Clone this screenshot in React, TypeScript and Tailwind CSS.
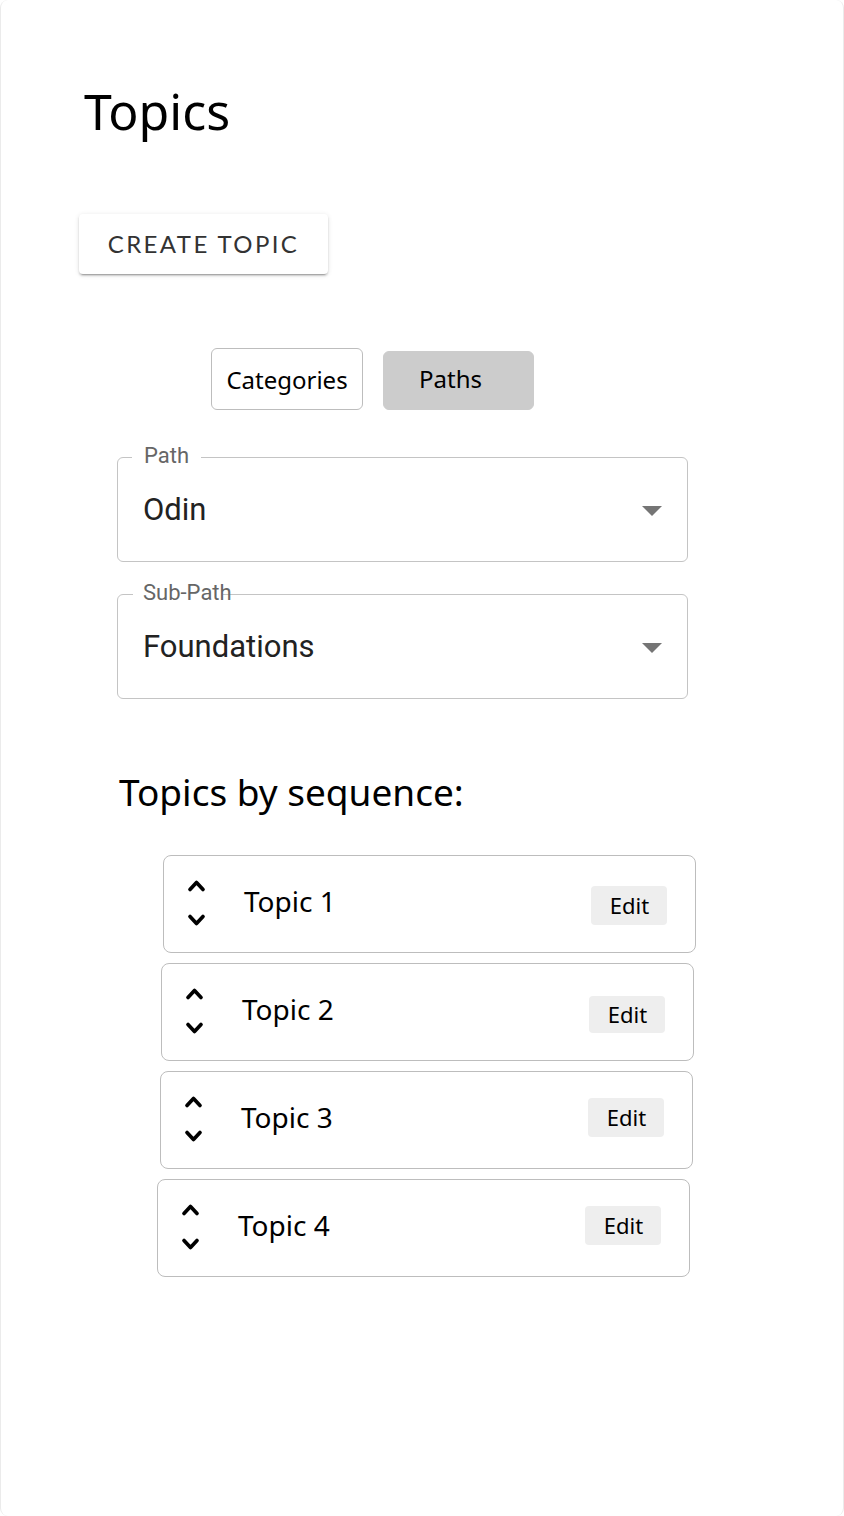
import { useState } from 'react';

const topics = [
  { name: 'Topic 1', ml: 'ml-[162px]', editTop: 'mt-[30px]', editH: 'h-[39px]' },
  { name: 'Topic 2', ml: 'ml-[160px]', editTop: 'mt-[32px]', editH: 'h-[37px]' },
  { name: 'Topic 3', ml: 'ml-[159px]', editTop: 'mt-[26px]', editH: 'h-[39px]' },
  { name: 'Topic 4', ml: 'ml-[156px]', editTop: 'mt-[26px]', editH: 'h-[39px]' },
];

function Chevrons() {
  return (
    <svg width="20" height="52" viewBox="0 0 20 52" fill="none" className="mt-[21px] shrink-0">
      <polyline points="4,12.5 10.5,5.5 17,12.5" stroke="#000" strokeWidth="3.7" strokeLinecap="round" strokeLinejoin="round" />
      <polyline points="4,39.5 10.5,46.5 17,39.5" stroke="#000" strokeWidth="3.7" strokeLinecap="round" strokeLinejoin="round" />
    </svg>
  );
}

function Caret() {
  return (
    <svg width="20" height="10" viewBox="0 0 20 10" className="absolute right-[25px] top-[48px]">
      <path d="M0 0 L20 0 L10 10 Z" fill="#757575" />
    </svg>
  );
}

export default function App() {
  const [tab, setTab] = useState<'categories' | 'paths'>('paths');

  return (
    <div className="w-full min-h-[1516px] bg-white border-x border-[#ebebeb] rounded-lg font-['Noto_Sans',sans-serif] text-black flex flex-col items-start">
      <h1 className="ml-[83px] mt-[87px] text-[50px] leading-[49px] font-normal">Topics</h1>

      <button className="ml-[78px] mt-[78px] w-[249px] h-[60px] bg-white rounded-[4px] shadow-[0px_3px_1px_-2px_rgba(0,0,0,0.2),0px_2px_2px_0px_rgba(0,0,0,0.14),0px_1px_5px_0px_rgba(0,0,0,0.12)] font-['Lato',sans-serif] text-[24px] tracking-[0.1em] text-[#333] uppercase flex items-center justify-center">
        Create Topic
      </button>

      <div className="ml-[210px] mt-[74px] flex items-end gap-[20px]">
        <button
          onClick={() => setTab('categories')}
          className={`w-[152px] h-[62px] rounded-[6px] border text-[24px] flex items-center justify-center pt-[2px] ${tab === 'categories' ? 'bg-[#cccccc] border-[#cccccc]' : 'bg-white border-[#bdbdbd]'}`}
        >
          Categories
        </button>
        <button
          onClick={() => setTab('paths')}
          className={`w-[151px] h-[59px] rounded-[6px] border text-[24px] flex items-start justify-start pl-[35px] pt-[9px] ${tab === 'paths' ? 'bg-[#cccccc] border-[#cccccc]' : 'bg-white border-[#bdbdbd]'}`}
        >
          Paths
        </button>
      </div>

      <div className="relative ml-[116px] mt-[47px] w-[571px] h-[105px] border border-[#c4c4c4] rounded-[6px] font-['Roboto',sans-serif] pl-[25px] pt-[36px]">
        <span className="absolute left-[14px] -top-[13px] px-[12px] bg-white text-[22px] leading-[22px] text-[#666]">Path</span>
        <div className="text-[31px] leading-[31px] text-[#222]">Odin</div>
        <Caret />
      </div>

      <div className="relative ml-[116px] mt-[32px] w-[571px] h-[105px] border border-[#c4c4c4] rounded-[6px] font-['Roboto',sans-serif] pl-[25px] pt-[36px]">
        <span className="absolute left-[15px] -top-[2px] w-[90px] h-[3px] bg-white" />
        <span className="absolute left-[25px] -top-[13px] text-[22px] leading-[22px] text-[#666]">Sub-Path</span>
        <div className="text-[31px] leading-[31px] text-[#222]">Foundations</div>
        <Caret />
      </div>

      <h2 className="ml-[118px] mt-[75px] text-[37px] leading-[36px] font-normal">Topics by sequence:</h2>

      <div className="mt-[45px] flex flex-col gap-[10px]">
        {topics.map((t) => (
          <div key={t.name} className={`${t.ml} w-[533px] h-[98px] border border-[#bdbdbd] rounded-[8px] flex items-start pl-[22px]`}>
            <Chevrons />
            <span className="ml-[38px] mt-[31px] text-[28px] leading-[28px]">{t.name}</span>
            <button className={`ml-auto mr-[28px] ${t.editTop} ${t.editH} w-[76px] rounded-[4px] bg-[#eeeeee] text-[22px] flex items-center justify-center pl-[1px]`}>
              Edit
            </button>
          </div>
        ))}
      </div>
    </div>
  );
}
